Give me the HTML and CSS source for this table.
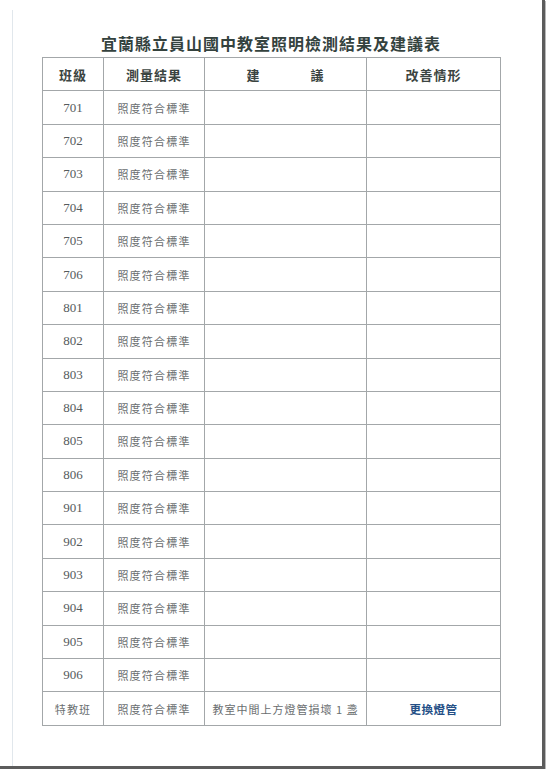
FILE: index.html
```html
<!DOCTYPE html>
<html lang="zh-Hant">
<head>
<meta charset="utf-8">
<title>宜蘭縣立員山國中教室照明檢測結果及建議表</title>
<link rel="stylesheet" href="styles.css">
</head>
<body>
<div class="sheet">
  <div class="frame">
    <h1 class="title">宜蘭縣立員山國中教室照明檢測結果及建議表</h1>
    <table class="report">
      <colgroup>
        <col class="c1"><col class="c2"><col class="c3"><col class="c4">
      </colgroup>
      <thead>
        <tr>
          <th>班級</th>
          <th>測量結果</th>
          <th><span class="jian">建</span><span>議</span></th>
          <th>改善情形</th>
        </tr>
      </thead>
      <tbody>
        <tr><td class="num">701</td><td class="res">照度符合標準</td><td></td><td></td></tr>
        <tr><td class="num">702</td><td class="res">照度符合標準</td><td></td><td></td></tr>
        <tr><td class="num">703</td><td class="res">照度符合標準</td><td></td><td></td></tr>
        <tr><td class="num">704</td><td class="res">照度符合標準</td><td></td><td></td></tr>
        <tr><td class="num">705</td><td class="res">照度符合標準</td><td></td><td></td></tr>
        <tr><td class="num">706</td><td class="res">照度符合標準</td><td></td><td></td></tr>
        <tr><td class="num">801</td><td class="res">照度符合標準</td><td></td><td></td></tr>
        <tr><td class="num">802</td><td class="res">照度符合標準</td><td></td><td></td></tr>
        <tr><td class="num">803</td><td class="res">照度符合標準</td><td></td><td></td></tr>
        <tr><td class="num">804</td><td class="res">照度符合標準</td><td></td><td></td></tr>
        <tr><td class="num">805</td><td class="res">照度符合標準</td><td></td><td></td></tr>
        <tr><td class="num">806</td><td class="res">照度符合標準</td><td></td><td></td></tr>
        <tr><td class="num">901</td><td class="res">照度符合標準</td><td></td><td></td></tr>
        <tr><td class="num">902</td><td class="res">照度符合標準</td><td></td><td></td></tr>
        <tr><td class="num">903</td><td class="res">照度符合標準</td><td></td><td></td></tr>
        <tr><td class="num">904</td><td class="res">照度符合標準</td><td></td><td></td></tr>
        <tr><td class="num">905</td><td class="res">照度符合標準</td><td></td><td></td></tr>
        <tr><td class="num">906</td><td class="res">照度符合標準</td><td></td><td></td></tr>
        <tr>
          <td class="res">特教班</td>
          <td class="res">照度符合標準</td>
          <td class="res note">教室中間上方燈管損壞 1 盞</td>
          <td class="fix">更換燈管</td>
        </tr>
      </tbody>
    </table>
  </div>
</div>
</body>
</html>
```

FILE: styles.css
```css
html, body {
  margin: 0;
  padding: 0;
  background: #ffffff;
}

.sheet {
  width: 542px;
  height: 766px;
  background: #ffffff;
  border-right: 3px solid #5c5c5c;
  border-bottom: 3px solid #5c5c5c;
  box-shadow: 1px 1px 0 #b8b8b8;
  overflow: hidden;
}

.frame {
  margin: 10px 0 0 12px;
  height: 756px;
  border-left: 1px solid #e1e7ec;
  padding: 22px 0 0 29px;
  box-sizing: border-box;
}

.title {
  width: 458px;
  margin: 0 0 3px 0;
  text-align: center;
  font-family: "Noto Sans CJK TC", "Noto Sans CJK SC", sans-serif;
  font-size: 16px;
  line-height: 22px;
  font-weight: 700;
  letter-spacing: 1px;
  color: #34423e;
}

.report {
  border-collapse: collapse;
  table-layout: fixed;
  width: 459px;
  font-family: "Noto Sans CJK TC", "Noto Sans CJK SC", sans-serif;
}

.c1 { width: 61px; }
.c2 { width: 101px; }
.c3 { width: 162px; }
.c4 { width: 134px; }

.report th,
.report td {
  border: 1px solid #a3a7a9;
  height: 32.4px;
  padding: 0;
  text-align: center;
  vertical-align: middle;
}

.report th {
  font-size: 13px;
  font-weight: 700;
  letter-spacing: 1px;
  color: #3b4441;
}

.jian {
  margin-right: 50px;
}

.num {
  font-family: "Liberation Serif", "Times New Roman", serif;
  font-size: 13px;
  color: #555a5c;
}

.res {
  font-size: 11px;
  letter-spacing: 1.2px;
  color: #6a6e70;
}

.note {
  letter-spacing: 1px;
}

.fix {
  font-size: 11.5px;
  font-weight: 700;
  letter-spacing: 0.5px;
  color: #244f86;
}
```
